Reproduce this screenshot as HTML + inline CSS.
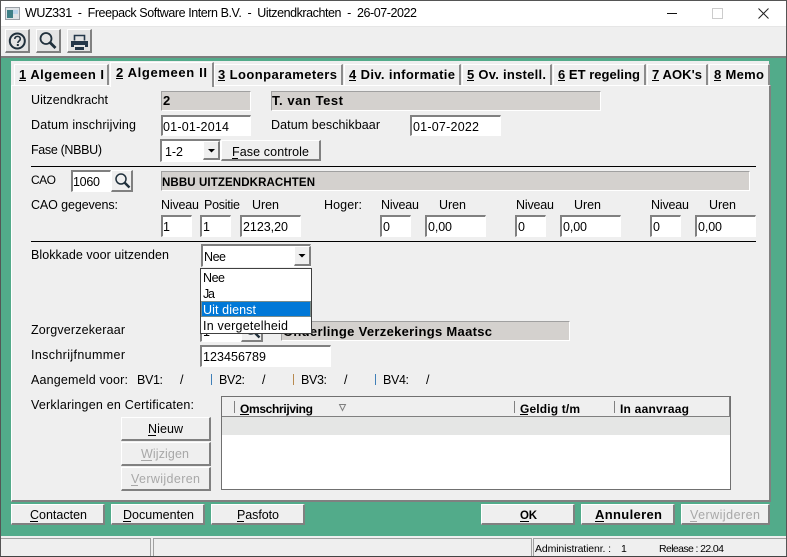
<!DOCTYPE html>
<html lang="nl"><head><meta charset="utf-8"><title>WUZ331</title>
<style>
html,body{margin:0;padding:0;width:787px;height:557px;overflow:hidden;background:#efefef}
#w{position:relative;width:787px;height:557px;overflow:hidden}
#w div{position:absolute;box-sizing:border-box}
.in{background:#fff;border-style:solid;border-width:2px 1px 1px 2px;border-color:#808080 #fff #fff #808080}
.ro{background:#d4d1ce;border-style:solid;border-width:1px;border-color:#a0a0a0 #fff #fff #a0a0a0}
.btn{background:#efefef;border-style:solid;border-width:1px 2px 2px 1px;border-color:#fff #808080 #808080 #fff}
.tab{background:#efefef;border-style:solid;border-width:1px 2px 0 1px;border-color:#fff #8c8c8c #fff #fff}
svg{position:absolute;left:0;top:0}
text{font-family:"Liberation Sans",sans-serif;font-size:12.5px;fill:#000;white-space:pre}
.b{font-weight:bold;font-size:13px}
.c{font-weight:bold;font-size:11.5px}
.h{font-weight:bold;font-size:12px}
.g{fill:#a8a8a8}
.s{font-size:10.500px}
.t{font-size:12.5px}
.n{font-size:12px}
</style></head><body>
<div id="w">
<div style="left:0;top:0;width:787px;height:1px;background:#555"></div>
<div style="left:0;top:1px;width:787px;height:25px;background:#fff"></div>
<div style="left:0;top:26px;width:787px;height:1px;background:#e6e6e6"></div>
<div style="left:0;top:27px;width:787px;height:29px;background:#efefef"></div>
<div style="left:0;top:56px;width:787px;height:2px;background:#7d7d7d"></div>
<div style="left:1px;top:58px;width:785px;height:478px;background:#52ab8a"></div>
<div style="left:0;top:0;width:1px;height:557px;background:#555"></div>
<div style="left:786px;top:0;width:1px;height:557px;background:#555"></div>
<div class="btn" style="left:5px;top:29px;width:25px;height:24px;background:#e4e4e4"></div>
<div class="btn" style="left:36px;top:29px;width:25px;height:24px;background:#e4e4e4"></div>
<div class="btn" style="left:67px;top:29px;width:25px;height:24px;background:#e4e4e4"></div>

<div style="left:11px;top:61px;width:758px;height:24px;background:#efefef"></div>
<div style="left:11px;top:85px;width:760px;height:417px;background:#efefef;border-style:solid;border-width:1px 2px 2px 1px;border-color:#fff #808080 #808080 #fff"></div>
<div class="tab" style="left:14px;top:64px;width:95px;height:21px"></div>
<div class="tab" style="left:214px;top:64px;width:129px;height:21px"></div>
<div class="tab" style="left:344px;top:64px;width:117px;height:21px"></div>
<div class="tab" style="left:462px;top:64px;width:90px;height:21px"></div>
<div class="tab" style="left:553px;top:64px;width:93px;height:21px"></div>
<div class="tab" style="left:647px;top:64px;width:61px;height:21px"></div>
<div class="tab" style="left:709px;top:64px;width:61px;height:21px"></div>
<div class="tab" style="left:110px;top:62px;width:104px;height:25px"></div>

<div class="ro" style="left:161px;top:91px;width:90px;height:20px"></div>
<div class="ro" style="left:271px;top:91px;width:330px;height:20px"></div>
<div class="in" style="left:161px;top:115px;width:90px;height:21px"></div>
<div class="in" style="left:410px;top:115px;width:91px;height:21px"></div>
<div class="in" style="left:160px;top:139px;width:61px;height:23px"></div>
<div class="btn" style="left:203px;top:141px;width:17px;height:19px"></div>
<div class="btn" style="left:221px;top:140px;width:100px;height:21px"></div>
<div style="left:31px;top:166px;width:725px;height:1px;background:#000"></div>
<div class="in" style="left:71px;top:170px;width:40px;height:22px"></div>
<div class="btn" style="left:111px;top:170px;width:22px;height:22px"></div>
<div class="ro" style="left:161px;top:171px;width:589px;height:20px"></div>
<div class="in" style="left:161px;top:215px;width:31px;height:22px"></div>
<div class="in" style="left:200px;top:215px;width:31px;height:22px"></div>
<div class="in" style="left:240px;top:215px;width:61px;height:22px"></div>
<div class="in" style="left:380px;top:215px;width:31px;height:22px"></div>
<div class="in" style="left:425px;top:215px;width:61px;height:22px"></div>
<div class="in" style="left:515px;top:215px;width:31px;height:22px"></div>
<div class="in" style="left:560px;top:215px;width:61px;height:22px"></div>
<div class="in" style="left:650px;top:215px;width:31px;height:22px"></div>
<div class="in" style="left:695px;top:215px;width:61px;height:22px"></div>
<div style="left:31px;top:241px;width:725px;height:1px;background:#000"></div>
<div class="in" style="left:201px;top:244px;width:110px;height:23px"></div>
<div class="btn" style="left:294px;top:246px;width:17px;height:20px"></div>
<div class="in" style="left:200px;top:320px;width:41px;height:22px"></div>
<div class="btn" style="left:241px;top:320px;width:22px;height:22px"></div>
<div class="ro" style="left:281px;top:321px;width:289px;height:20px"></div>
<div class="in" style="left:200px;top:345px;width:131px;height:22px"></div>
<div class="btn" style="left:121px;top:417px;width:90px;height:24px"></div>
<div class="btn" style="left:121px;top:442px;width:90px;height:24px"></div>
<div class="btn" style="left:121px;top:467px;width:90px;height:24px"></div>
<div style="left:221px;top:396px;width:510px;height:94px;background:#fff;border:1px solid #707070"></div>
<div style="left:222px;top:397px;width:508px;height:20px;background:#efefef;border-bottom:1px solid #808080;border-right:1px solid #808080"></div>
<div style="left:222px;top:417px;width:508px;height:18px;background:#e5e6e5"></div>
<div style="left:234px;top:401px;width:1px;height:12px;background:#808080"></div>
<div style="left:514px;top:401px;width:1px;height:12px;background:#808080"></div>
<div style="left:614px;top:401px;width:1px;height:12px;background:#808080"></div>
<div class="btn" style="left:11px;top:504px;width:94px;height:21px"></div>
<div class="btn" style="left:111px;top:504px;width:94px;height:21px"></div>
<div class="btn" style="left:211px;top:504px;width:94px;height:21px"></div>
<div class="btn" style="left:481px;top:504px;width:94px;height:21px"></div>
<div class="btn" style="left:581px;top:504px;width:94px;height:21px"></div>
<div class="btn" style="left:681px;top:504px;width:89px;height:21px"></div>
<div style="left:1px;top:536px;width:785px;height:20px;background:#efefef"></div>
<div style="left:1px;top:538px;width:150px;height:18px;border-top:1px solid #a0a0a0;border-right:1px solid #a0a0a0"></div>
<div style="left:153px;top:538px;width:379px;height:18px;border-top:1px solid #a0a0a0;border-left:1px solid #a0a0a0;border-right:1px solid #a0a0a0"></div>
<div style="left:533px;top:538px;width:253px;height:18px;border-top:1px solid #a0a0a0;border-left:1px solid #a0a0a0"></div>
<div style="left:0;top:556px;width:787px;height:1px;background:#444"></div>

<svg width="787" height="557" viewBox="0 0 787 557">
<!-- title -->
<rect x="5.500" y="7.500" width="14" height="12" fill="#dfe3e6" stroke="#9aa0a6"/>
<rect x="7" y="10" width="6" height="8" fill="#3d7f86"/><rect x="13" y="10" width="5" height="4" fill="#b9d4ea"/>
<text class="t" x="25" y="17" textLength="392">WUZ331  -  Freepack Software Intern B.V.  -  Uitzendkrachten  -  26-07-2022</text>
<rect x="667" y="13" width="10" height="1" fill="#111"/>
<rect x="712.500" y="8.500" width="10" height="10" fill="none" stroke="#ccc"/>
<path d="M758.500 8.500l10 10M768.500 8.500l-10 10" stroke="#222" fill="none"/>
<!-- toolbar icons -->
<circle cx="17.300" cy="41" r="7.500" fill="none" stroke="#20303c" stroke-width="2"/>
<path d="M14.800 39c0-3.500 5.500-3.500 5.500 0 0 2-2.500 2-2.500 4" fill="none" stroke="#20303c" stroke-width="1.600"/>
<rect x="16.800" y="44" width="2" height="2" fill="#20303c"/>
<circle cx="46" cy="38.500" r="5.500" fill="none" stroke="#20303c" stroke-width="1.800"/>
<path d="M50 42.500l5.500 5.500" stroke="#20303c" stroke-width="2.800"/>
<path d="M74.500 40.500v-5h10v5" fill="none" stroke="#25384a" stroke-width="1.600"/>
<path d="M71 41h17v6h-3v-2h-11v2h-3z" fill="#25384a"/>
<rect x="75" y="47" width="9" height="3" fill="#25384a"/>
<!-- tabs -->
<text class="b" x="19" y="79" textLength="85">1 Algemeen I</text><rect x="19" y="80" width="7" height="1"/>
<text class="b" x="116" y="77" textLength="91">2 Algemeen II</text><rect x="116" y="78" width="7" height="1"/>
<text class="b" x="218" y="79" textLength="119">3 Loonparameters</text><rect x="218" y="80" width="7" height="1"/>
<text class="b" x="349" y="79" textLength="106">4 Div. informatie</text><rect x="349" y="80" width="7" height="1"/>
<text class="b" x="467" y="79" textLength="79">5 Ov. instell.</text><rect x="467" y="80" width="7" height="1"/>
<text class="b" x="558" y="79" textLength="82">6 ET regeling</text><rect x="558" y="80" width="7" height="1"/>
<text class="b" x="652" y="79" textLength="50">7 AOK's</text><rect x="652" y="80" width="7" height="1"/>
<text class="b" x="714" y="79" textLength="50">8 Memo</text><rect x="714" y="80" width="7" height="1"/>
<!-- form -->
<text x="31" y="104" textLength="77">Uitzendkracht</text>
<text class="b" x="163" y="105">2</text>
<text class="b" x="272" y="105" textLength="71">T. van Test</text>
<text x="31" y="129" textLength="105">Datum inschrijving</text>
<text x="163" y="131" textLength="66">01-01-2014</text>
<text x="271" y="129" textLength="109">Datum beschikbaar</text>
<text x="413" y="131" textLength="66">01-07-2022</text>
<text x="31" y="154" textLength="71">Fase (NBBU)</text>
<text x="165" y="156" textLength="18">1-2</text>
<path d="M208 149h7l-3.500 3.500z"/>
<text x="232" y="156" textLength="77">Fase controle</text><rect x="232" y="158" width="6" height="1"/>
<text class="n" x="31" y="184" textLength="25">CAO</text>
<text x="73" y="186" textLength="27">1060</text>
<circle cx="121" cy="179" r="5" fill="none" stroke="#20303c" stroke-width="1.500"/><path d="M124.500 182.500l5 5" stroke="#20303c" stroke-width="2.400"/>
<text class="c" x="162" y="186" textLength="153">NBBU UITZENDKRACHTEN</text>
<text x="31" y="209" textLength="87">CAO gegevens:</text>
<text x="161" y="209" textLength="38">Niveau</text>
<text x="204" y="209" textLength="36">Positie</text>
<text x="252" y="209" textLength="27">Uren</text>
<text x="324" y="209" textLength="38">Hoger:</text>
<text x="381" y="209" textLength="38">Niveau</text>
<text x="439" y="209" textLength="27">Uren</text>
<text x="516" y="209" textLength="38">Niveau</text>
<text x="574" y="209" textLength="27">Uren</text>
<text x="651" y="209" textLength="38">Niveau</text>
<text x="709" y="209" textLength="27">Uren</text>
<text x="163" y="231">1</text>
<text x="203" y="231">1</text>
<text x="243" y="231" textLength="45">2123,20</text>
<text x="383" y="231">0</text>
<text x="428" y="231" textLength="24">0,00</text>
<text x="518" y="231">0</text>
<text x="563" y="231" textLength="24">0,00</text>
<text x="653" y="231">0</text>
<text x="698" y="231" textLength="24">0,00</text>
<text x="31" y="259" textLength="138">Blokkade voor uitzenden</text>
<text x="204" y="261" textLength="22">Nee</text>
<path d="M298.500 254h7l-3.500 3.500z"/>
<text x="31" y="334" textLength="94">Zorgverzekeraar</text>
<text x="203" y="336">1</text>
<circle cx="251" cy="329" r="5" fill="none" stroke="#20303c" stroke-width="1.500"/><path d="M254.500 332.500l5 5" stroke="#20303c" stroke-width="2.400"/>
<text class="b" x="283" y="336" textLength="209">Onderlinge Verzekerings Maatsc</text>
<text x="31" y="359" textLength="94">Inschrijfnummer</text>
<text x="203" y="361" textLength="63">123456789</text>
<text x="31" y="384" textLength="97">Aangemeld voor:</text>
<text x="137" y="384" textLength="26">BV1:</text><text x="180" y="384">/</text><rect x="211" y="374" width="1" height="11" fill="#3f7fb8"/>
<text x="219" y="384" textLength="26">BV2:</text><text x="262" y="384">/</text><rect x="293" y="374" width="1" height="11" fill="#b88a4f"/>
<text x="301" y="384" textLength="26">BV3:</text><text x="344" y="384">/</text><rect x="375" y="374" width="1" height="11" fill="#3f7fb8"/>
<text x="383" y="384" textLength="26">BV4:</text><text x="426" y="384">/</text>
<text x="31" y="409" textLength="163">Verklaringen en Certificaten:</text>
<text x="148" y="433" textLength="35">Nieuw</text><rect x="148" y="435" width="8" height="1"/>
<text class="g" x="141" y="458" textLength="48">Wijzigen</text><rect x="141" y="460" width="11" height="1" fill="#a8a8a8"/>
<text class="g" x="131" y="483" textLength="69">Verwijderen</text><rect x="131" y="485" width="7" height="1" fill="#a8a8a8"/>
<text class="h" x="240" y="413" textLength="73">Omschrijving</text><rect x="240" y="414" width="9" height="1"/>
<path d="M339.500 404.500h6l-3 6z" fill="none" stroke="#808080"/>
<text class="h" x="520" y="413" textLength="60">Geldig t/m</text><rect x="520" y="414" width="8" height="1"/>
<text class="h" x="620" y="413" textLength="69">In aanvraag</text>
<text x="30" y="519" textLength="57">Contacten</text><rect x="30" y="521" width="8" height="1"/>
<text x="123" y="519" textLength="71">Documenten</text><rect x="123" y="521" width="8" height="1"/>
<text x="237" y="519" textLength="42">Pasfoto</text><rect x="237" y="521" width="7" height="1"/>
<text class="c" x="520" y="519" textLength="17">OK</text><rect x="520" y="521" width="9" height="1"/>
<text class="b" x="595" y="519" textLength="67">Annuleren</text><rect x="595" y="521" width="9" height="1"/>
<text class="g" x="690" y="519" textLength="70">Verwijderen</text><rect x="690" y="521" width="7" height="1" fill="#a8a8a8"/>
<text class="s" x="535" y="552" textLength="76">Administratienr. :</text>
<text class="s" x="621" y="552">1</text>
<text class="s" x="659" y="552" textLength="65">Release : 22.04</text>
<!-- dropdown -->
<rect x="200.500" y="268.500" width="111" height="65" fill="#fff" stroke="#404040"/>
<rect x="201" y="301" width="110" height="16" fill="#0078d7"/>
<rect x="201.500" y="301.500" width="109" height="15" fill="none" stroke="#f0a040" stroke-dasharray="1 1"/>
<text x="203" y="282" textLength="22">Nee</text>
<text x="203" y="298" textLength="12">Ja</text>
<text x="203" y="314" textLength="53" style="fill:#fff">Uit dienst</text>
<text x="203" y="330" textLength="85">In vergetelheid</text>
</svg>
</div>
</body></html>
